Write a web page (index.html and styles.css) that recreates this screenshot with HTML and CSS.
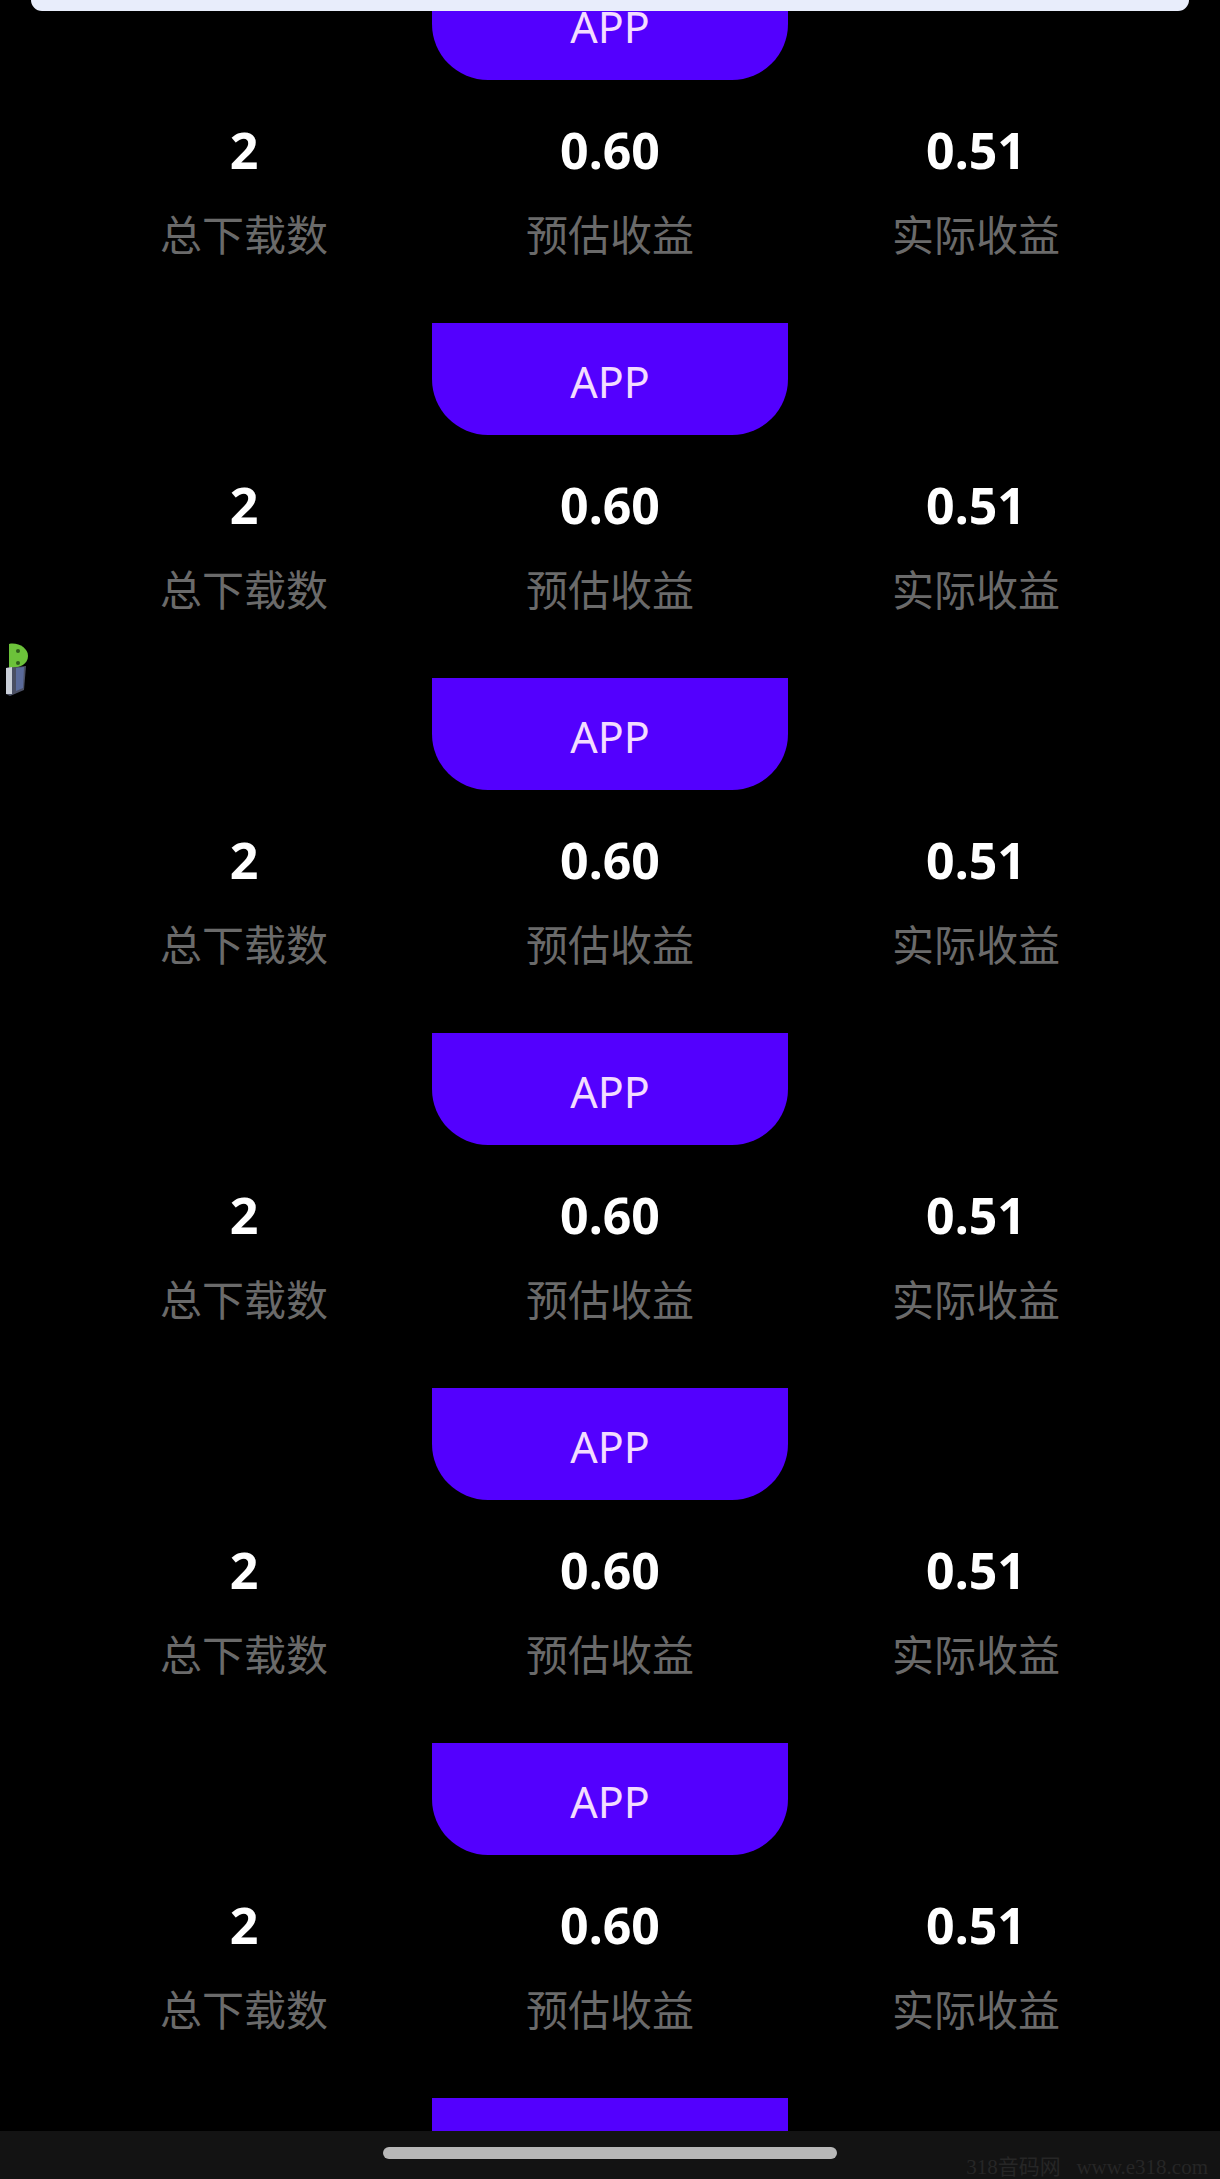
FILE: index.html
```html
<!DOCTYPE html>
<html lang="zh-CN">
<head>
<meta charset="utf-8">
<title>APP 收益</title>
<link rel="stylesheet" href="styles.css">
</head>
<body>
<div class="page">
  <div class="topcard"></div>

  <div class="list">
    <div class="item">
      <div class="tab">APP</div>
      <div class="stats">
        <div class="stat"><div class="num">2</div><div class="label">总下载数</div></div>
        <div class="stat"><div class="num">0.60</div><div class="label">预估收益</div></div>
        <div class="stat"><div class="num">0.51</div><div class="label">实际收益</div></div>
      </div>
    </div>
    <div class="item">
      <div class="tab">APP</div>
      <div class="stats">
        <div class="stat"><div class="num">2</div><div class="label">总下载数</div></div>
        <div class="stat"><div class="num">0.60</div><div class="label">预估收益</div></div>
        <div class="stat"><div class="num">0.51</div><div class="label">实际收益</div></div>
      </div>
    </div>
    <div class="item">
      <div class="tab">APP</div>
      <div class="stats">
        <div class="stat"><div class="num">2</div><div class="label">总下载数</div></div>
        <div class="stat"><div class="num">0.60</div><div class="label">预估收益</div></div>
        <div class="stat"><div class="num">0.51</div><div class="label">实际收益</div></div>
      </div>
    </div>
    <div class="item">
      <div class="tab">APP</div>
      <div class="stats">
        <div class="stat"><div class="num">2</div><div class="label">总下载数</div></div>
        <div class="stat"><div class="num">0.60</div><div class="label">预估收益</div></div>
        <div class="stat"><div class="num">0.51</div><div class="label">实际收益</div></div>
      </div>
    </div>
    <div class="item">
      <div class="tab">APP</div>
      <div class="stats">
        <div class="stat"><div class="num">2</div><div class="label">总下载数</div></div>
        <div class="stat"><div class="num">0.60</div><div class="label">预估收益</div></div>
        <div class="stat"><div class="num">0.51</div><div class="label">实际收益</div></div>
      </div>
    </div>
    <div class="item">
      <div class="tab">APP</div>
      <div class="stats">
        <div class="stat"><div class="num">2</div><div class="label">总下载数</div></div>
        <div class="stat"><div class="num">0.60</div><div class="label">预估收益</div></div>
        <div class="stat"><div class="num">0.51</div><div class="label">实际收益</div></div>
      </div>
    </div>
    <div class="item">
      <div class="tab"></div>
    </div>
  </div>

  <svg class="floater" width="30" height="60" viewBox="0 0 30 60" aria-hidden="true">
    <path d="M7 2 C16 0 26 6 26 14 C26 22 18 26 9 26 L7 26 Z" fill="#6cc23a"/>
    <circle cx="16" cy="9" r="2" fill="#2f5e1a"/>
    <circle cx="16" cy="21" r="2" fill="#2f5e1a"/>
    <path d="M4 26 L24 24 L22 48 L8 54 L4 52 Z" fill="#4a4f63"/>
    <path d="M4 26 L10 25 L10 52 L4 52 Z" fill="#c9ced8"/>
    <path d="M14 26 L22 25 L21 46 L14 49 Z" fill="#5a6a9a"/>
  </svg>

  <div class="navbar">
    <div class="pill"></div>
  </div>
  <div class="watermark">318音码网&nbsp;&nbsp;&nbsp;www.e318.com</div>
</div>
</body>
</html>
```

FILE: styles.css
```css
html, body {
  margin: 0;
  padding: 0;
  background: #000;
}

body {
  width: 1220px;
  height: 2179px;
  overflow: hidden;
  font-family: "Noto Sans", "Noto Sans CJK SC", sans-serif;
}

.page {
  position: relative;
  width: 1220px;
  height: 2179px;
  overflow: hidden;
  background: #000;
}

.topcard {
  position: absolute;
  top: 0;
  left: 31px;
  right: 31px;
  height: 11px;
  background: #e8edfb;
  border-radius: 0 0 12px 12px;
  z-index: 3;
}

.list {
  display: flex;
  flex-direction: column;
  margin-top: -32px;
}

.item {
  display: flex;
  flex-direction: column;
  align-items: center;
}

.tab {
  width: 356px;
  height: 112px;
  box-sizing: border-box;
  padding-top: 5px;
  background: #5300fe;
  border-radius: 0 0 56px 56px;
  display: flex;
  align-items: center;
  justify-content: center;
  color: #f3dcff;
  font-family: "Noto Sans", sans-serif;
  font-size: 43px;
  font-weight: 400;
}

.stats {
  width: 1098px;
  display: grid;
  grid-template-columns: 1fr 1fr 1fr;
  padding-top: 40px;
  padding-bottom: 62px;
}

.stat {
  display: flex;
  flex-direction: column;
  align-items: center;
  gap: 25px;
}

.num {
  font-family: "Noto Sans", sans-serif;
  font-weight: 700;
  font-size: 50px;
  line-height: 60px;
  color: #fff;
}

.label {
  font-family: "Noto Sans CJK SC", sans-serif;
  font-size: 42px;
  line-height: 56px;
  color: #6a6a6a;
}

.floater {
  position: absolute;
  left: 2px;
  top: 642px;
}

.navbar {
  position: absolute;
  left: 0;
  right: 0;
  bottom: 0;
  height: 48px;
  background: #131313;
  display: flex;
  justify-content: center;
  padding-top: 16px;
  box-sizing: border-box;
  z-index: 2;
}

.pill {
  width: 454px;
  height: 12px;
  border-radius: 6px;
  background: #b8b8b8;
}

.watermark {
  position: absolute;
  right: 12px;
  bottom: 1px;
  font-family: "Liberation Serif", "Noto Sans CJK SC", serif;
  font-size: 21px;
  line-height: 22px;
  color: #262626;
  z-index: 4;
  white-space: nowrap;
}
```
